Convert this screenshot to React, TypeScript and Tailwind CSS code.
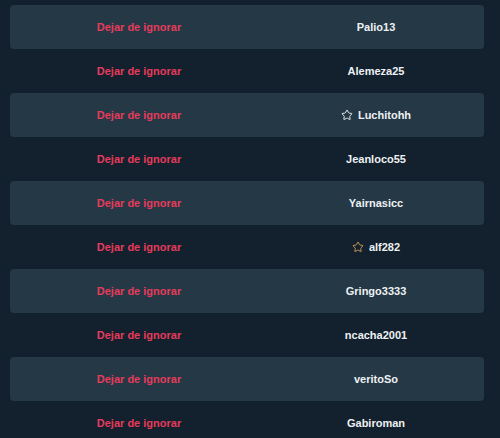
import { Star } from "lucide-react";

type Row = { name: string; star?: "white" | "gold" };

const rows: Row[] = [
  { name: "Palio13" },
  { name: "Alemeza25" },
  { name: "Luchitohh", star: "white" },
  { name: "Jeanloco55" },
  { name: "Yairnasicc" },
  { name: "alf282", star: "gold" },
  { name: "Gringo3333" },
  { name: "ncacha2001" },
  { name: "veritoSo" },
  { name: "Gabiroman" },
];

export default function App() {
  return (
    <div className="min-h-screen w-full bg-[#13202d] pt-[5px] pl-[10px] pr-[16px] font-['Liberation_Sans',sans-serif]">
      {rows.map((row, i) => (
        <div
          key={row.name}
          className={`flex h-[44px] items-center rounded-[4px] ${i % 2 === 0 ? "bg-[#243845]" : ""}`}
        >
          <div className="w-[258px] text-center text-[11px] font-bold text-[#e63b5b]">
            Dejar de ignorar
          </div>
          <div className="flex flex-1 items-center justify-center gap-[5px] text-[11px] font-bold text-[#eef1f3]">
            {row.star && (
              <Star
                size={12}
                strokeWidth={2}
                className={row.star === "gold" ? "text-[#c8995a]" : "text-[#e6eaee]"}
              />
            )}
            <span>{row.name}</span>
          </div>
        </div>
      ))}
    </div>
  );
}
